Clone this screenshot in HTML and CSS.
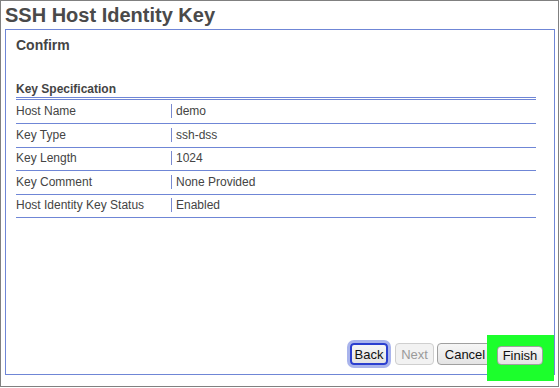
FILE: index.html
```html
<!DOCTYPE html>
<html lang="en">
<head>
    <meta charset="UTF-8">
    <title>SSH Host Identity Key</title>
    <link rel="stylesheet" href="styles.css">
</head>
<body>
    <div class="frame">
        <h1>SSH Host Identity Key</h1>

        <div class="panel">
            <h2>Confirm</h2>

            <div class="section">
                <h3>Key Specification</h3>
                <table class="spec">
                    <tr><td class="label">Host Name</td><td><span class="value">demo</span></td></tr>
                    <tr><td class="label">Key Type</td><td><span class="value">ssh-dss</span></td></tr>
                    <tr><td class="label">Key Length</td><td><span class="value">1024</span></td></tr>
                    <tr><td class="label">Key Comment</td><td><span class="value">None Provided</span></td></tr>
                    <tr><td class="label">Host Identity Key Status</td><td><span class="value">Enabled</span></td></tr>
                </table>
            </div>

            <div class="buttons">
                <button class="btn btn-back">Back</button>
                <button class="btn btn-next" disabled>Next</button>
                <button class="btn btn-cancel">Cancel</button>
                <div class="highlight">
                    <button class="btn btn-finish">Finish</button>
                </div>
            </div>
        </div>
    </div>
</body>
</html>
```

FILE: styles.css
```css
* {
    margin: 0;
    padding: 0;
    box-sizing: border-box;
}

body {
    font-family: "Liberation Sans", Arial, sans-serif;
    background: #fff;
    color: #444;
}

.frame {
    width: 559px;
    height: 387px;
    border: 1px solid #808080;
    display: flex;
    flex-direction: column;
}

h1 {
    font-size: 20px;
    font-weight: bold;
    color: #4a4a4a;
    line-height: 28px;
    padding-left: 4px;
}

.panel {
    width: 550px;
    height: 346px;
    margin-left: 4px;
    border: 1px solid #6f86d6;
    padding: 6px 11px 9px 10px;
    display: flex;
    flex-direction: column;
}

h2 {
    font-size: 14px;
    font-weight: bold;
    color: #444;
    line-height: 18px;
}

.section {
    margin-top: 27px;
    margin-right: 7px;
}

h3 {
    font-size: 12px;
    font-weight: bold;
    color: #444;
    line-height: 16px;
    border-bottom: 3px double #6f86d6;
}

.spec {
    width: 100%;
    border-collapse: collapse;
    font-size: 12px;
}

.spec td {
    height: 23.5px;
    border-bottom: 1px solid #6f86d6;
    vertical-align: middle;
    padding: 0 0 1px 0;
}

.spec .label {
    width: 155px;
}

.value {
    display: inline-block;
    border-left: 1px solid #7a8ad0;
    padding-left: 4px;
    line-height: 14px;
}

.buttons {
    margin-top: auto;
    display: flex;
    justify-content: flex-end;
    align-items: flex-end;
    gap: 4px;
}

.btn {
    font-family: "Liberation Sans", Arial, sans-serif;
    font-size: 13px;
    color: #111;
    height: 22px;
    padding: 0;
    border: 1px solid #a0a0a0;
    border-radius: 4px;
    background: linear-gradient(#f6f6f6, #e4e4e4);
}

.btn:disabled {
    color: #9a9a9a;
    border-color: #cfcfcf;
    background: #f2f2f2;
}

.btn-back {
    width: 38px;
    border: 2px solid #2b3fcf;
    box-shadow: 0 0 0 3px #a9b4ec;
    margin: 0 3px;
}

.btn-next {
    width: 39px;
}

.btn-cancel {
    width: 56px;
    margin-left: -1px;
}

.btn-finish {
    width: 46px;
    height: 19px;
    display: block;
}

.highlight {
    background: #1cff2c;
    padding: 11px 11px 16px 10px;
    margin: -11px -11px -16px -10px;
}
```
